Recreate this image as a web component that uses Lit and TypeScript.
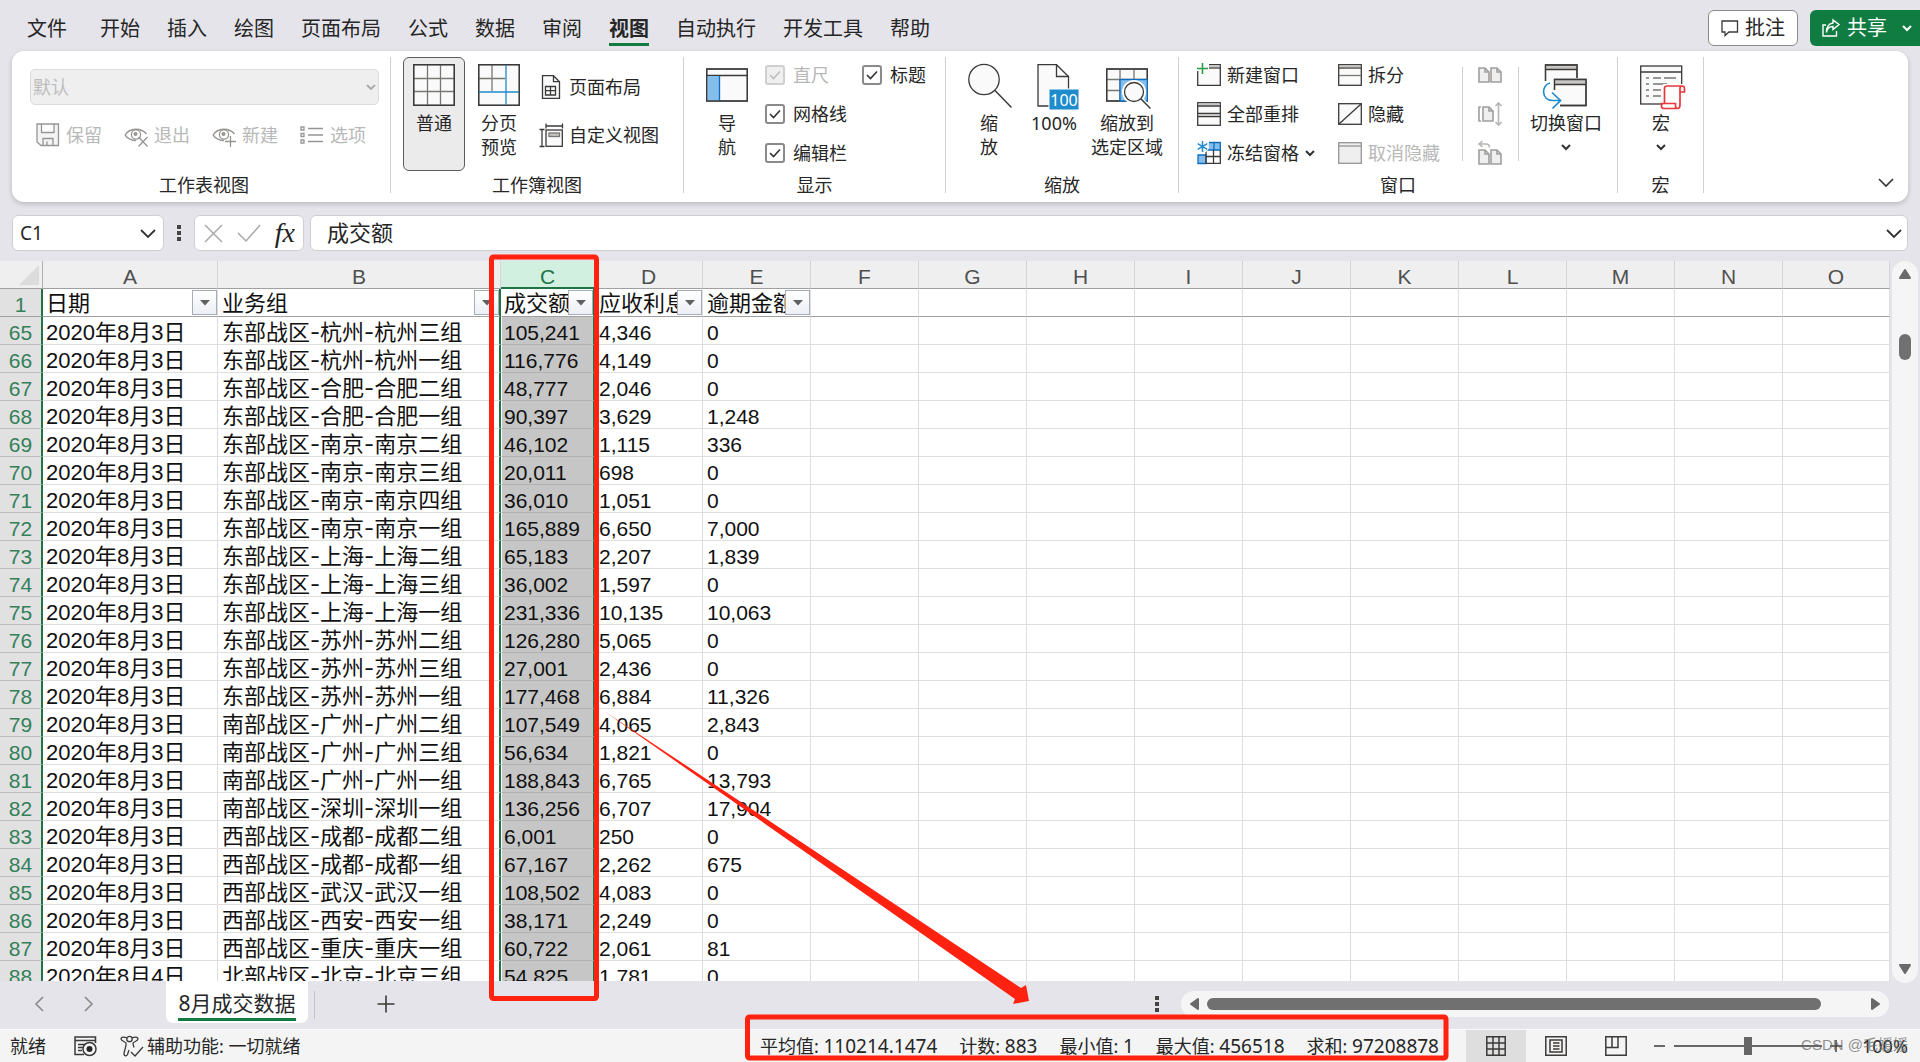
import { LitElement, html, svg, css, nothing, TemplateResult } from "lit";
import { customElement } from "lit/decorators.js";
import { classMap } from "lit/directives/class-map.js";

type Row = [number, string, string, string, string, string];

const D3 = "2020年8月3日";
const ROWS: Row[] = [
  [65, D3, "东部战区-杭州-杭州三组", "105,241", "4,346", "0"],
  [66, D3, "东部战区-杭州-杭州一组", "116,776", "4,149", "0"],
  [67, D3, "东部战区-合肥-合肥二组", "48,777", "2,046", "0"],
  [68, D3, "东部战区-合肥-合肥一组", "90,397", "3,629", "1,248"],
  [69, D3, "东部战区-南京-南京二组", "46,102", "1,115", "336"],
  [70, D3, "东部战区-南京-南京三组", "20,011", "698", "0"],
  [71, D3, "东部战区-南京-南京四组", "36,010", "1,051", "0"],
  [72, D3, "东部战区-南京-南京一组", "165,889", "6,650", "7,000"],
  [73, D3, "东部战区-上海-上海二组", "65,183", "2,207", "1,839"],
  [74, D3, "东部战区-上海-上海三组", "36,002", "1,597", "0"],
  [75, D3, "东部战区-上海-上海一组", "231,336", "10,135", "10,063"],
  [76, D3, "东部战区-苏州-苏州二组", "126,280", "5,065", "0"],
  [77, D3, "东部战区-苏州-苏州三组", "27,001", "2,436", "0"],
  [78, D3, "东部战区-苏州-苏州一组", "177,468", "6,884", "11,326"],
  [79, D3, "南部战区-广州-广州二组", "107,549", "4,065", "2,843"],
  [80, D3, "南部战区-广州-广州三组", "56,634", "1,821", "0"],
  [81, D3, "南部战区-广州-广州一组", "188,843", "6,765", "13,793"],
  [82, D3, "南部战区-深圳-深圳一组", "136,256", "6,707", "17,904"],
  [83, D3, "西部战区-成都-成都二组", "6,001", "250", "0"],
  [84, D3, "西部战区-成都-成都一组", "67,167", "2,262", "675"],
  [85, D3, "西部战区-武汉-武汉一组", "108,502", "4,083", "0"],
  [86, D3, "西部战区-西安-西安一组", "38,171", "2,249", "0"],
  [87, D3, "西部战区-重庆-重庆一组", "60,722", "2,061", "81"],
  [88, "2020年8月4日", "北部战区-北京-北京三组", "54,825", "1,781", "0"],
];

const COLS = ["A", "B", "C", "D", "E", "F", "G", "H", "I", "J", "K", "L", "M", "N", "O"];
const HEADS = ["日期", "业务组", "成交额", "应收利息", "逾期金额"];
const TABS = ["文件", "开始", "插入", "绘图", "页面布局", "公式", "数据", "审阅", "视图", "自动执行", "开发工具", "帮助"];
const STATS = [["平均值", "110214.1474"], ["计数", "883"], ["最小值", "1"], ["最大值", "456518"], ["求和", "97208878"]];

const icon = (w: number, h: number, body: TemplateResult | TemplateResult[]) =>
  html`<svg class="icon" width=${w} height=${h} viewBox="0 0 ${w} ${h}" fill="none" stroke="#3b3a39" stroke-width="1.3" aria-hidden="true">${body}</svg>`;

const chevron = (w: number, h: number, sw = 1.6, color = "#333") =>
  html`<svg class="icon" width=${w + 2} height=${h + 2} viewBox="0 0 ${w + 2} ${h + 2}" fill="none" stroke=${color} stroke-width=${sw} aria-hidden="true">
    <path d="M1 1 L${w / 2 + 1} ${h + 1} L${w + 1} 1" />
  </svg>`;

const page = (x: number, y: number) => svg`
  <path d="M${x} ${y} h6 l4 4 v10 h-10 z M${x + 6} ${y} v4 h4" />`;

const I = {
  save: icon(24, 24, svg`<g stroke="#979593"><path d="M1 1 H22.500 V22.500 H5 L1 19 Z M5.500 1 V9.500 H18 V1 M7 22.500 V15.500 H17 V22.500 M11 22.500 V18.500" fill="#f4f4f4"/></g>`),
  exit: icon(24, 24, svg`<g stroke="#979593"><path d="M1 12 C6 4.500 17 4.500 22.500 11"/><path d="M1 12 C4 16 8 17.500 12 17.500"/><circle cx="12" cy="11.500" r="4.600" fill="#fff"/><circle cx="11.500" cy="11" r="2" fill="#979593" stroke="none"/><path d="M14.500 14 L23.500 23.500 M23.500 14 L14.500 23.500"/></g>`),
  create: icon(24, 24, svg`<g stroke="#979593"><path d="M1 12 C6 4.500 17 4.500 22.500 11"/><path d="M1 12 C4 16 8 17.500 12 17.500"/><circle cx="12" cy="11.500" r="4.600" fill="#fff"/><circle cx="11.500" cy="11" r="2" fill="#979593" stroke="none"/><path d="M18.500 13 V24 M13 18.500 H24"/></g>`),
  options: icon(24, 24, svg`<g stroke="#979593"><path d="M1 4 h3 v3 h-3z M1 10.500 h3 v3 h-3z M1 17 h3 v3 h-3z"/><path d="M8 5.500 H23 M8 12 H23 M8 18.500 H23" stroke-width="1.500"/></g>`),
  normal: icon(42, 42, svg`<rect x=".7" y=".7" width="40.600" height="40.600" fill="#fafafa"/><path d="M14.500 1 V41 M27.500 1 V41 M1 14.500 H41 M1 27.500 H41" stroke="#797774"/><rect x=".7" y=".7" width="40.600" height="40.600"/>`),
  breaks: icon(42, 42, svg`<rect x=".7" y=".7" width="40.600" height="40.600" fill="#fafafa"/><path d="M14 1 V27 M1 14.500 H27" stroke="#797774"/><rect x=".7" y=".7" width="40.600" height="40.600"/><path d="M28 1 V41 M1 28 H41" stroke="#1e8bcd"/>`),
  layout: icon(24, 24, svg`<path d="M3.500 .7 H14.500 L20.500 6.700 V23.300 H3.500 Z" fill="#fafafa"/><path d="M14.500 .7 V6.700 H20.500"/><path d="M6.500 11.500 h10 v8.500 h-10 z M11.500 11.500 v8.500 M6.500 15.700 h10"/>`),
  custom: icon(24, 24, svg`<path d="M7 3 H24 M7 .500 V5.500 M23.500 .500 V5.500 M3 6.500 V23.500 M.500 6.500 H5.500 M.500 23.500 H5.500"/><rect x="7" y="7" width="16.300" height="16.300" fill="#fafafa"/><rect x="10" y="10" width="10.500" height="3.500" fill="#c8c6c4" stroke="#797774"/>`),
  nav: icon(42, 42, svg`<rect x=".7" y="5" width="40.600" height="32" fill="#fafafa"/><path d="M1 11.500 H41"/><rect x="1.300" y="12" width="11.700" height="24.500" fill="#83beec" stroke="none"/><path d="M13.500 12 V36.500" stroke="#0f6cbd"/><rect x=".7" y="5" width="40.600" height="32"/>`),
  zoom: icon(42, 46, svg`<circle cx="16" cy="15.500" r="15.200" fill="#fafafa"/><path d="M27 26.500 L43.500 43.500" stroke-width="1.500"/>`),
  hundred: icon(34, 46, svg`<path d="M1 .7 H19.500 L31.500 12.500 V42 H1 Z" fill="#fafafa"/><path d="M19.500 .7 V12.500 H31.500"/><rect x="11.500" y="24.500" width="31" height="22" fill="#fff" stroke="none"/><rect x="12.500" y="25.500" width="29" height="20" fill="#1e8bcd" stroke="none"/><text x="27" y="41.500" text-anchor="middle" font-size="16" font-family="Noto Sans, sans-serif" fill="#fff" stroke="none">100</text>`),
  region: icon(42, 46, svg`<rect x=".7" y="5" width="40.600" height="32" fill="#fafafa"/><path d="M14 5 V37 M28 5 V37 M1 15.500 H41 M1 26.500 H41" stroke="#797774"/><rect x=".7" y="5" width="40.600" height="32"/><rect x="14" y="15.500" width="27.300" height="21.500" fill="#83beec" stroke="#0f6cbd"/><circle cx="28" cy="28" r="12" fill="#fff" stroke="none"/><path d="M34 34 L44.500 44.500" stroke="#fff" stroke-width="4"/><circle cx="28" cy="28" r="9.500" fill="#fafafa"/><path d="M34.800 34.800 L44.500 44.500" stroke-width="1.500"/>`),
  newWin: icon(24, 24, svg`<path d="M.7 8 V22.300 H23.300 V1.700 H12" fill="#fafafa"/><path d="M12 3.300 H22.500" stroke="#c8c6c4"/><path d="M12 5 H23"/><path d="M5.500 0 V11 M0 5.500 H11" stroke="#2a9d46" stroke-width="1.600"/>`),
  arrange: icon(24, 24, svg`<rect x=".7" y=".7" width="22.600" height="22.600" fill="#fafafa"/><path d="M1 4 H23 M1 11.500 H23 M1 14.500 H23"/><path d="M1.500 2.300 H22.500 M1.500 13 H22.500" stroke="#c8c6c4"/>`),
  freeze: icon(24, 24, svg`<path d="M12 1.500 H23.300 V9 H9.500 M1 14 H9 V22.500 H1 Z" fill="#83beec" stroke="#0f6cbd"/><path d="M17 1.500 V9" stroke="#0f6cbd"/><path d="M9 9 V22.300 H23.300 V9 M16.500 9 V22 M9 15.500 H23"/><circle cx="5.500" cy="5.500" r="6.500" fill="#fff" stroke="none"/><path d="M5.500 0 V11 M.700 2.700 L10.300 8.300 M10.300 2.700 L.700 8.300" stroke="#1e8bcd" stroke-width="1.500"/>`),
  split: icon(24, 24, svg`<rect x=".7" y="1.700" width="22.600" height="20.600" fill="#fafafa"/><path d="M1 5 H23"/><path d="M1.500 3.300 H22.500" stroke="#c8c6c4"/><path d="M1 12.500 H23" stroke="#797774"/>`),
  hide: icon(24, 24, svg`<rect x=".7" y="1.700" width="22.600" height="20.600" fill="#fafafa"/><path d="M1 22 L23 2"/>`),
  unhide: icon(24, 24, svg`<g stroke="#979593"><rect x=".7" y="1.700" width="22.600" height="20.600" fill="#efefef"/><path d="M1 5 H23"/></g>`),
  side: icon(24, 24, svg`<g stroke="#a19f9d" stroke-width="1.600" fill="#efefef">${page(1, 5)}${page(13, 5)}</g>`),
  sync: icon(24, 24, svg`<g stroke="#a19f9d" stroke-width="1.600"><path d="M3 5 H1 V19 H3"/><g fill="#efefef">${page(5, 5)}</g><path d="M20.500 1 V23 M17.500 4 L20.500 1 L23.500 4 M17.500 20 L20.500 23 L23.500 20" stroke="#b8b6b4"/></g>`),
  reset: icon(24, 24, svg`<g stroke="#a19f9d" stroke-width="1.600"><g fill="#efefef">${page(1, 9)}${page(13, 9)}</g><path d="M4.500 0 L1 3 L4.500 6 M1 3 H8 C10 3 11.500 4 11.500 6.500" stroke="#b8b6b4"/></g>`),
  switchWin: icon(50, 46, svg`<path d="M4.500 17 V1 H36 V14" fill="#fafafa"/><path d="M5 3.500 H35.500" stroke="#c8c6c4" stroke-width="4"/><path d="M4.500 17 V1 H36 V14 M4.500 5.500 H36"/><path d="M13.500 26 V15.500 H45 V41.500 H19" fill="#fafafa"/><path d="M14 18 H44.500" stroke="#c8c6c4" stroke-width="4"/><path d="M13.500 26 V15.500 H45 V41.500 H19 M13.500 20.500 H45"/><path d="M9 19 C0 21 0 36.500 12 36.500 H19.500 M11 28.500 L19.500 36.500 L11.500 44.500" stroke="#1e8bcd" stroke-width="1.700"/>`),
  macro: icon(42, 46, svg`<rect x=".7" y="2" width="41" height="38" fill="#fafafa"/><path d="M1 8 H41.500"/><path d="M6 14 h3 M13 14 h8 M24 14 h12 M6 20 h3 M13 20 h14 M6 26 h3 M13 26 h8 M6 32 h3 M13 32 h8" stroke="#797774"/><path d="M23 46 V20 H46 V46" fill="#fff" stroke="none"/><path d="M24.500 39 V24 C24.500 22.500 25.500 22 27 22 H42 C40.500 22 40 23 40 24.500 V41 C40 43.500 39 44.500 37.500 44.500 H24 C22 44.500 21.500 43.500 21.500 42 V39.500 H35.500 V42 C35.500 44 36.500 44.500 37.500 44.500 M40 28 H44.500 V24.500 C44.500 23 43.500 22 42 22" stroke="#e8383b" stroke-width="1.700"/>`),
};

@customElement("app-root")
export class AppRoot extends LitElement {
  static styles = css`
    :host {
      display: flex;
      flex-direction: column;
      position: relative;
      height: 100vh;
      overflow: hidden;
      background: #e4e4ea;
      color: #262626;
      font: 18px/24px "Noto Sans", "Noto Sans CJK SC", sans-serif;
      font-weight: 400;
    }
    * { box-sizing: border-box; }
    button, input, select {
      font: inherit;
      color: inherit;
      background: none;
      border: 0;
      padding: 0;
      margin: 0;
      outline: none;
    }
    .icon { display: block; flex: none; overflow: visible; }
    .tabs {
      display: flex;
      align-items: center;
      gap: 27px;
      height: 51px;
      padding-left: 27px;
      padding-top: 7px;
      font-size: 20px;
      line-height: 30px;
      flex: none;
    }
    .tab { color: inherit; text-decoration: none; white-space: nowrap; }
    .tab.first { margin-right: 6px; }
    .tab.active { font-weight: 700; box-shadow: inset 0 -3px #0f7b41; height: 34px; padding-top: 2px; }
    .actions { margin-left: auto; display: flex; gap: 12px; align-self: flex-start; padding-top: 3px; }
    .comment, .share { display: flex; align-items: center; height: 36px; border-radius: 6px; }
    .comment { width: 90px; gap: 6px; padding-left: 12px; background: #fff; border: 1px solid #8a8a8a; }
    .share { width: 110px; gap: 7px; padding-left: 12px; background: #107c41; color: #fff; border-radius: 6px 0 0 6px; }
    .share .caret { margin-left: auto; padding-right: 8px; }

    .ribbon {
      display: flex;
      flex: none;
      margin: 0 12px;
      padding: 6px 0 9px;
      height: 151px;
      background: #fff;
      border-radius: 12px;
      box-shadow: 0 2px 5px rgba(0, 0, 0, 0.2);
    }
    .group {
      display: flex;
      flex-direction: column;
      flex: none;
      border-right: 1px solid #d0d0d0;
    }
    .body { display: flex; align-items: flex-start; flex: 1; padding-left: 12px; }
    .caption { line-height: 14px; padding-bottom: 1px; text-align: center; }
    .g1 { width: 379px; }
    .g1 .caption { padding-left: 6px; }
    .g2 { width: 293px; }
    .g3 { width: 262px; }
    .g4 { width: 233px; }
    .g5 { width: 439px; }
    .g6 { width: 86px; }
    .sheetview { flex-direction: column; padding: 12px 11px 0 18px; }
    .picker { position: relative; align-self: stretch; color: #c0c0c0; }
    .picker select {
      appearance: none;
      width: 100%;
      height: 36px;
      padding-left: 2px;
      background: #efefef;
      border: 1px solid #dcdcdc;
      border-radius: 5px;
      color: #bdbdbd;
      opacity: 1;
      display: block;
    }
    .picker .icon { position: absolute; right: 3px; top: 15px; }
    .line { display: flex; gap: 22px; padding: 18px 0 0 6px; }
    .small { display: flex; align-items: center; gap: 6px; height: 24px; white-space: nowrap; }
    .off { color: #b8b8b8; }
    .big {
      display: flex;
      flex-direction: column;
      align-items: center;
      width: 62px;
      height: 114px;
      padding-top: 6px;
      border: 1px solid transparent;
      border-radius: 6px;
      white-space: nowrap;
      margin-right: 3px;
    }
    .big .art { height: 47px; display: block; }
    .big .caret { padding-top: 9px; }
    .big.on { background: #ebebeb; border-color: #5c5c5c; }
    .wide { width: 78px; }
    .views { display: flex; flex-direction: column; gap: 24px; padding: 18px 0 0 6px; }
    .checks {
      display: grid;
      grid-template-columns: 97px auto;
      row-gap: 15px;
      padding: 6px 0 0 4px;
    }
    .check { display: flex; align-items: center; gap: 8px; height: 24px; white-space: nowrap; }
    .check input {
      appearance: none;
      width: 20px;
      height: 20px;
      border: 2px solid #8a8a8a;
      border-radius: 3px;
      background: #fff;
    }
    .tick { display: grid; }
    .tick > * { grid-area: 1 / 1; }
    .tick .icon { place-self: center; pointer-events: none; }
    .check.off input { border-color: #cfcfcf; background: #efefef; }
    .stack { display: flex; flex-direction: column; gap: 15px; padding-top: 6px; }
    .s1 { width: 141px; }
    .s2 { width: 124px; }
    .s3 { width: 55px; padding-left: 15px; }
    .rule { width: 1px; height: 94px; margin-top: 10px; background: #d0d0d0; }
    .windows { padding-left: 18px; }
    .windows .big { margin-left: 8px; }
    .collapse { margin: auto 14px 6px auto; }

    .formula { display: flex; flex: none; height: 59px; padding: 13px 12px 10px; align-items: stretch; }
    .box {
      display: flex;
      align-items: center;
      background: #fff;
      border: 1px solid #cfcfd3;
      border-radius: 6px;
    }
    .name { width: 152px; padding: 0 7px; }
    .name input { flex: 1; width: 80px; font-size: 19px; }
    .dots { width: 30px; display: flex; align-items: center; justify-content: center; }
    .fx { width: 110px; padding: 0 8px 0 9px; justify-content: space-between; }
    .fx .fn { font: italic 28px/30px "Liberation Serif", serif; color: #222; }
    .entry { flex: 1; margin-left: 6px; padding: 0 5px 0 16px; }
    .entry input { flex: 1; font-size: 22px; line-height: 30px; padding-bottom: 3px; }

    .sheet { display: flex; flex: 1; min-height: 0; }
    .cells { flex: 1; min-width: 0; overflow: hidden; background: #fff; }
    table { border-collapse: separate; border-spacing: 0; table-layout: fixed; width: 100%; }
    .wh { width: 43px; }
    .wa { width: 175px; }
    .wb { width: 283px; }
    .wc { width: 94px; }
    .wn { width: 108px; }
    th, td {
      height: 28px;
      padding: 4px 0 0 4px;
      border-right: 1px solid #dedede;
      border-bottom: 1px solid #dedede;
      font: 21px/23px "Liberation Sans", "Noto Sans CJK SC", sans-serif;
      font-weight: 400;
      text-align: left;
      vertical-align: top;
      white-space: nowrap;
      overflow: hidden;
      color: #111;
    }
    thead th {
      background: #efefef;
      border-bottom-color: #a0a0a0;
      border-right-color: #d4d4d4;
      color: #505050;
      text-align: center;
      padding-left: 0;
    }
    thead th.c { background: #d2f0e0; color: #217346; box-shadow: inset 0 -1px #217346; border-bottom-color: #217346; }
    thead th.corner { border-right-color: #b0b0b0; padding-top: 4px; }
    .corner svg { display: block; margin-left: 19px; }
    tbody th {
      padding-left: 0;
      text-align: center;
      background: #e1e1e1;
      color: #33805a;
      border-right: 2px solid #217346;
      border-bottom-color: #bdbdbd;
    }
    td.a { padding-left: 3px; font-size: 22px; }
    td.b { font-family: "Inter", "Noto Sans CJK SC", sans-serif; font-size: 22px; border-right: 2px solid #217346; }
    td.c { background: #c6c6c6; border-left: 1px solid #fff; border-right: 2px solid #217346; border-bottom-color: #b0b0b0; padding-left: 2px; }
    .head td, .head th { border-bottom-color: #a0a0a0; }
    .head td { font-size: 22px; padding-top: 0; padding-bottom: 0; }
    .head td.c { background: #fff; }
    .cell { display: flex; height: 27px; }
    .cell .text { flex: 1; min-width: 0; overflow: hidden; padding-top: 3px; }
    .filter {
      flex: none;
      width: 25px;
      height: 25px;
      margin-top: 1px;
      border: 1px solid #a6adb8;
      background: linear-gradient(#fff, #eceff5);
      display: flex;
      align-items: center;
      justify-content: center;
    }
    .vbar { width: 30px; flex: none; padding-left: 2px; display: flex; }
    .vtrack {
      width: 26px;
      margin: 0 0 -2px;
      border-radius: 13px;
      background: #f5f5f5;
      display: flex;
      flex-direction: column;
      align-items: center;
      justify-content: space-between;
      padding: 6px 0 7px;
    }
    .vthumb { width: 12px; height: 26px; border-radius: 6px; background: #707070; margin: 53px 0 auto; }

    .sheets { display: flex; flex: none; height: 48px; align-items: flex-start; }
    .arrows { display: flex; gap: 40px; width: 166px; padding: 15px 0 0 34px; }
    .current {
      width: 142px;
      height: 42px;
      padding: 5px 12px 0;
      background: #fff;
      border-radius: 0 0 7px 7px;
      font-size: 21px;
      line-height: 30px;
      white-space: nowrap;
      text-align: center;
    }
    .current span { display: block; border-bottom: 3px solid #107c41; }
    .sep { width: 1px; height: 28px; margin: 10px 0 0 6px; background: #c4c4c8; }
    .add { margin: 14px 0 0 62px; }
    .sheets .dots { margin: 15px 9px 0 auto; }
    .htrack {
      width: 37%;
      max-width: 708px;
      height: 26px;
      margin: 10px 31px 0 0;
      padding: 0 8px;
      border-radius: 13px;
      background: #f5f5f5;
      display: flex;
      align-items: center;
    }
    .hthumb { flex: 1; height: 12px; margin: 0 50px 0 8px; border-radius: 6px; background: #707070; }

    .status {
      display: flex;
      flex: none;
      align-items: center;
      height: 33px;
      background: #f4f4f4;
      border-top: 1px solid #fbfbfb;
      padding: 0 0 1px 10px;
      white-space: nowrap;
    }
    .rec { margin: 0 22px 0 28px; }
    .acc { margin-right: 3px; }
    .stats { display: flex; gap: 22px; margin: 0 27px 0 auto; }
    .num { font-size: 19px; }
    .view { width: 60px; height: 32px; display: flex; align-items: center; justify-content: center; }
    .view.on { background: #dedede; }
    .minus { margin: 0 9px 0 8px; }
    .zoombar { appearance: none; width: 148px; height: 18px; background: linear-gradient(#666, #666) center / 100% 2px no-repeat; }
    .zoombar::-webkit-slider-thumb { appearance: none; width: 8px; height: 18px; background: #666; }
    .plus { margin: 0 20px 0 8px; }
    .level { width: 58px; text-align: left; }
    .mark {
      position: absolute;
      right: 12px;
      bottom: 5px;
      font: 15px/24px "Liberation Sans", "Noto Sans CJK SC", sans-serif;
      color: rgba(110, 110, 110, 0.75);
    }
    .notes { position: absolute; left: 0; top: 0; pointer-events: none; }
  `;

  private big(art: TemplateResult, lines: string[], opts: { on?: boolean; wide?: boolean; caret?: boolean } = {}) {
    return html`<button class=${classMap({ big: true, on: !!opts.on, wide: !!opts.wide })}>
      <span class="art">${art}</span>
      ${lines.map((l) => html`<span>${l}</span>`)}
      ${opts.caret ? html`<span class="caret">${chevron(8, 4, 2)}</span>` : nothing}
    </button>`;
  }

  private small(art: TemplateResult, text: string, off = false, caret = false) {
    return html`<button class=${classMap({ small: true, off })} ?disabled=${off}>
      ${art}<span>${text}</span>${caret ? chevron(8, 4, 2) : nothing}
    </button>`;
  }

  private check(text: string, off = false) {
    return html`<label class=${classMap({ check: true, off })}>
      <span class="tick"><input type="checkbox" checked ?disabled=${off} />
        <svg class="icon" width="12" height="10" viewBox="0 0 12 10" fill="none" stroke=${off ? "#bdbdbd" : "#333"} stroke-width="1.600"><path d="M1 5 L4.500 8.500 L11 1.500" /></svg></span>
      ${text}
    </label>`;
  }

  private dots() {
    return html`<span class="dots"><svg class="icon" width="4" height="16" viewBox="0 0 4 16" fill="#444"><path d="M0 0h4v4H0z M0 6h4v4H0z M0 12h4v4H0z" /></svg></span>`;
  }

  private filter(label: string) {
    return html`<button class="filter" aria-label=${label}><svg class="icon" width="10" height="6" viewBox="0 0 10 6"><path d="M0 0 H10 L5 5.500 Z" fill="#606060" /></svg></button>`;
  }

  private triangle(d: string, w = 14, h = 14) {
    return html`<svg class="icon" width=${w} height=${h} viewBox="0 0 ${w} ${h}"><path d=${d} fill="#6a6a6a" stroke="#6a6a6a" stroke-width="2" stroke-linejoin="round" /></svg>`;
  }

  private renderRibbon() {
    return html`<section class="ribbon">
      <div class="group g1">
        <div class="body sheetview">
          <div class="picker"><select aria-label="工作表视图" disabled><option>默认</option></select>${chevron(8, 4, 1.8, "#aaa")}</div>
          <div class="line">
            ${this.small(I.save, "保留", true)}${this.small(I.exit, "退出", true)}${this.small(I.create, "新建", true)}${this.small(I.options, "选项", true)}
          </div>
        </div>
        <div class="caption">工作表视图</div>
      </div>
      <div class="group g2">
        <div class="body">
          ${this.big(I.normal, ["普通"], { on: true })}${this.big(I.breaks, ["分页", "预览"])}
          <div class="views">${this.small(I.layout, "页面布局")}${this.small(I.custom, "自定义视图")}</div>
        </div>
        <div class="caption">工作簿视图</div>
      </div>
      <div class="group g3">
        <div class="body">
          ${this.big(I.nav, ["导", "航"])}
          <div class="checks">
            ${this.check("直尺", true)}${this.check("标题")}${this.check("网格线")}<span></span>${this.check("编辑栏")}
          </div>
        </div>
        <div class="caption">显示</div>
      </div>
      <div class="group g4">
        <div class="body">
          ${this.big(I.zoom, ["缩", "放"])}${this.big(I.hundred, ["100%"])}${this.big(I.region, ["缩放到", "选定区域"], { wide: true })}
        </div>
        <div class="caption">缩放</div>
      </div>
      <div class="group g5">
        <div class="body windows">
          <div class="stack s1">${this.small(I.newWin, "新建窗口")}${this.small(I.arrange, "全部重排")}${this.small(I.freeze, "冻结窗格", false, true)}</div>
          <div class="stack s2">${this.small(I.split, "拆分")}${this.small(I.hide, "隐藏")}${this.small(I.unhide, "取消隐藏", true)}</div>
          <div class="rule"></div>
          <div class="stack s3">${this.small(I.side, "", true)}${this.small(I.sync, "", true)}${this.small(I.reset, "", true)}</div>
          <div class="rule"></div>
          ${this.big(I.switchWin, ["切换窗口"], { wide: true, caret: true })}
        </div>
        <div class="caption">窗口</div>
      </div>
      <div class="group g6">
        <div class="body">${this.big(I.macro, ["宏"], { caret: true })}</div>
        <div class="caption">宏</div>
      </div>
      <button class="collapse" aria-label="折叠功能区">${chevron(14, 7)}</button>
    </section>`;
  }

  private renderSheet() {
    return html`<section class="sheet">
      <div class="cells">
        <table>
          <colgroup>
            <col class="wh" /><col class="wa" /><col class="wb" /><col class="wc" />
            ${COLS.slice(3, -1).map(() => html`<col class="wn" />`)}<col />
          </colgroup>
          <thead>
            <tr>
              <th class="corner"><svg width="20" height="20" viewBox="0 0 20 20"><path d="M20 0 V20 H0 Z" fill="#dcdcdc" /></svg></th>
              ${COLS.map((c) => html`<th class=${c.toLowerCase()}>${c}</th>`)}
            </tr>
          </thead>
          <tbody>
            <tr class="head">
              <th>1</th>
              ${COLS.map((c, i) => html`<td class=${c.toLowerCase()}>${HEADS[i]
                ? html`<div class="cell"><span class="text">${HEADS[i]}</span>${this.filter(HEADS[i])}</div>`
                : nothing}</td>`)}
            </tr>
            ${ROWS.map(([n, ...v]) => html`<tr>
              <th>${n}</th>
              ${COLS.map((c, i) => html`<td class=${c.toLowerCase()}>${v[i] ?? nothing}</td>`)}
            </tr>`)}
          </tbody>
        </table>
      </div>
      <div class="vbar"><div class="vtrack">
        ${this.triangle("M2 11 L7 3 L12 11 Z")}
        <div class="vthumb"></div>
        ${this.triangle("M2 3 L7 11 L12 3 Z")}
      </div></div>
    </section>`;
  }

  private renderBottom() {
    return html`<nav class="sheets">
        <div class="arrows">
          <button aria-label="上一个工作表">${icon(10, 16, svg`<path d="M9 1 L2 8 L9 15" stroke="#8a8a8a" stroke-width="1.600"/>`)}</button>
          <button aria-label="下一个工作表">${icon(10, 16, svg`<path d="M1 1 L8 8 L1 15" stroke="#8a8a8a" stroke-width="1.600"/>`)}</button>
        </div>
        <button class="current"><span>8月成交数据</span></button>
        <div class="sep"></div>
        <button class="add" aria-label="新工作表">${icon(18, 18, svg`<path d="M9 .500 V17.500 M.500 9 H17.500" stroke-width="1.600"/>`)}</button>
        ${this.dots()}
        <div class="htrack">
          ${this.triangle("M9 2 L2 7 L9 12 Z", 10)}
          <div class="hthumb"></div>
          ${this.triangle("M1 2 L8 7 L1 12 Z", 10)}
        </div>
      </nav>
      <footer class="status">
        <span>就绪</span>
        <span class="rec">${icon(24, 22, svg`<path d="M10 19.500 H1 V2 H21.500 V8 M1 5.500 H21.500 M4 9.500 H11 M4 12.500 H9 M4 15.500 H8" stroke-width="1.500"/><circle cx="15.500" cy="14" r="6.500" stroke-width="1.500"/><circle cx="15.500" cy="14" r="3" fill="#262626" stroke="none"/>`)}</span>
        <span class="acc">${icon(24, 22, svg`<circle cx="9.500" cy="4" r="2.700"/><path d="M7 3 C4 1.500 1 2 1 4 C1 6 5 6.500 6 8 C7 11 4 15 4 19 C4 21 6.500 21.500 7.500 19.500 L9 15 M12 3 C15 1.500 18 2 18 4 C18 6 14 6.500 13 8 C13 9.500 13.500 11 14 12.500 M11 17 L15 21 L23 12"/>`)}</span>
        <span>辅助功能: 一切就绪</span>
        <div class="stats">
          ${STATS.map(([k, v]) => html`<span>${k}: <span class="num">${v}</span></span>`)}
        </div>
        <button class="view on" aria-label="普通">${icon(20, 20, svg`<path d="M.8 .8 H19.200 V19.200 H.8 Z M7 1 V19 M13 1 V19 M1 7 H19 M1 13 H19" stroke-width="1.500"/>`)}</button>
        <button class="view" aria-label="页面布局">${icon(22, 20, svg`<path d="M.8 .8 H21.200 V19.200 H.8 Z M5 4 H17 V16 H5 Z M8 7 H14.500 M8 10 H14.500 M8 13 H14.500" stroke-width="1.500"/>`)}</button>
        <button class="view" aria-label="分页预览">${icon(22, 20, svg`<path d="M.8 .8 H21.200 V19.200 H.8 Z M1 11.500 H13 V1 M7 1 V11" stroke-width="1.500"/>`)}</button>
        <button class="minus" aria-label="缩小">${icon(11, 12, svg`<path d="M0 6 H11" stroke-width="1.500"/>`)}</button>
        <input class="zoombar" type="range" aria-label="缩放" min="0" max="100" value="50" />
        <button class="plus" aria-label="放大">${icon(12, 12, svg`<path d="M0 6 H12 M6 0 V12" stroke-width="1.500"/>`)}</button>
        <span class="level">100%</span>
      </footer>`;
  }

  render() {
    return html`
      <nav class="tabs">
        ${TABS.map((t, i) => html`<a href="#" class=${classMap({ tab: true, first: i === 0, active: t === "视图" })}>${t}</a>`)}
        <div class="actions">
          <button class="comment">${icon(18, 18, svg`<path d="M1 2 H16.500 V13 H8 L4 16.500 V13 H1 Z"/>`)}批注</button>
          <button class="share">${icon(18, 18, svg`<path d="M4 6 H1 V17 H14.500 V12 M4.500 13.500 C5 9 7.500 7.500 11 7.500 V10.500 L17 5.500 L11 1 V4 C7 4.500 4 8 4.500 13.500 Z" stroke="#fff" stroke-width="1.400"/>`)}共享<span class="caret">${chevron(8, 4, 2, "#fff")}</span></button>
        </div>
      </nav>
      ${this.renderRibbon()}
      <section class="formula">
        <div class="box name"><input aria-label="名称框" .value=${"C1"} />${chevron(14, 7, 1.8)}</div>
        ${this.dots()}
        <div class="box fx">
          ${icon(19, 19, svg`<path d="M1 1 L18 18 M18 1 L1 18" stroke="#a8a8a8" stroke-width="1.500"/>`)}
          ${icon(24, 19, svg`<path d="M1 9 L9 17 L23 1" stroke="#a8a8a8" stroke-width="1.500"/>`)}
          <button class="fn" aria-label="插入函数">fx</button>
        </div>
        <div class="box entry"><input aria-label="编辑栏" .value=${"成交额"} />${chevron(14, 7, 1.8)}</div>
      </section>
      ${this.renderSheet()}
      ${this.renderBottom()}
      <div class="mark">CSDN @毛媛媛</div>
      <svg class="notes" width="1920" height="1062" viewBox="0 0 1920 1062" fill="none" stroke="#ff2211" stroke-width="5" aria-hidden="true">
        <rect x="491.500" y="257" width="105" height="741.500" rx="2" />
        <rect x="747.500" y="1017" width="698.500" height="41" rx="2" />
        <path d="M604 711 L1021 988 L1026 985 L1029 1001 L1013 1004 L1015 999 Z" fill="#ff2211" stroke="none" />
      </svg>
    `;
  }
}
